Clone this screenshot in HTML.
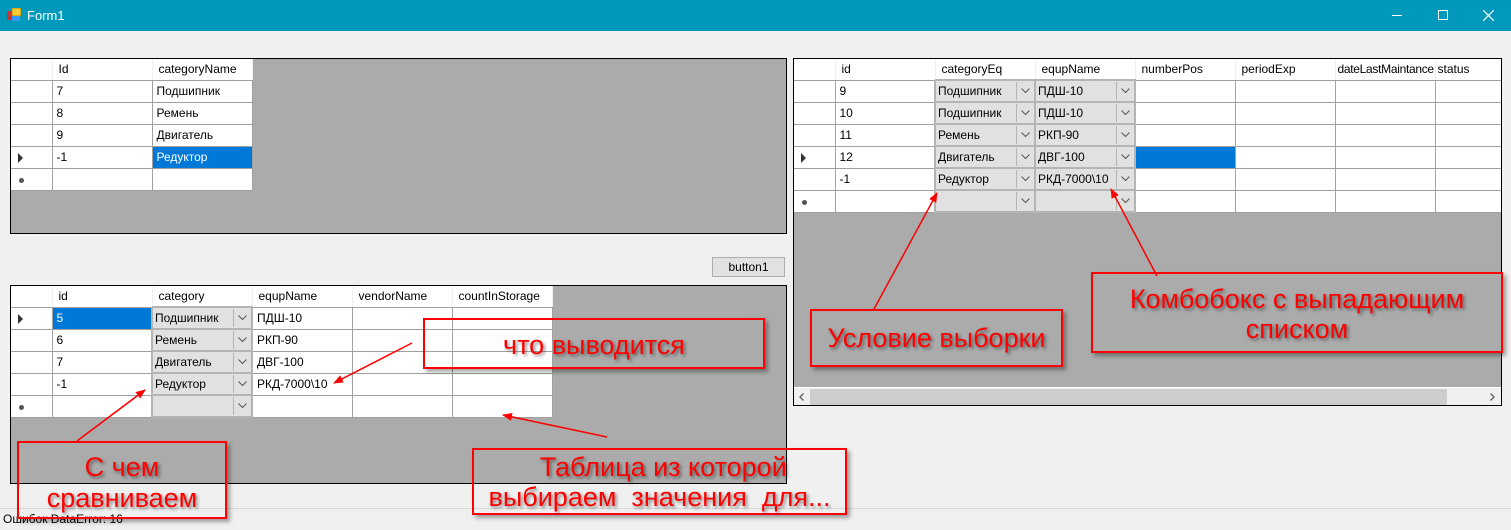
<!DOCTYPE html>
<html><head><meta charset="utf-8"><style>
*{box-sizing:border-box;margin:0;padding:0}
body{width:1511px;height:530px;background:#f0f0f0;position:relative;overflow:hidden;font-family:"Liberation Sans","DejaVu Sans",sans-serif;font-size:12px;color:#000}
.tb{position:absolute;left:0;top:0;width:1511px;height:31px;background:#0099bc;color:#fff}
.grid{position:absolute;background:#ababab;border:1px solid #000;overflow:hidden}
table{border-collapse:collapse;table-layout:fixed;position:absolute;left:0;top:0}
td{height:22px;border-right:1px solid #a0a0a0;border-bottom:1px solid #a0a0a0;background:#fff;padding:0 0 0 4px;white-space:nowrap;overflow:hidden;font-size:12px;position:relative}
tr.h td{height:21px;border-bottom:1px solid #a0a0a0;border-right:1px solid #f0f0f0;padding-left:6px}
td.rh{padding:0;border-right:1px solid #a0a0a0}
tr.h td.rh{border-right:1px solid #f0f0f0}
td.sel{background:#0078d7;color:#fff}
td.cb{background:#e1e1e1;border:2px solid #b4b4b4;padding-left:2px}
td.cb::after{content:"";position:absolute;right:17px;top:1px;bottom:1px;width:1px;background:#b4b4b4}
td.cb svg{position:absolute;right:4px;top:7px}
.tri{position:absolute;left:7px;top:6px;width:0;height:0;border-left:5px solid #333;border-top:5px solid transparent;border-bottom:5px solid transparent}
.star{position:absolute;left:8px;top:9px;width:5px;height:5px;border-radius:50%;background:#555}
.box{position:absolute;border:2px solid #f00;box-shadow:3px 3px 4px rgba(0,0,0,.35);color:#f00;font-size:27px;text-align:center;line-height:30px;text-shadow:2px 2px 3px rgba(0,0,0,.45)}
</style></head><body>
<div class="tb">
 <svg style="position:absolute;left:7px;top:8px" width="14" height="14"><rect x="0" y="3" width="6" height="9" fill="#c33"/><rect x="5" y="0" width="9" height="8" fill="#fc3" stroke="#a80" stroke-width="1"/><rect x="5" y="8" width="8" height="5" fill="#39f"/></svg>
 <span style="position:absolute;left:27px;top:8px;font-size:13px">Form1</span>
 <div style="position:absolute;left:1392px;top:15px;width:10px;height:1px;background:#fff"></div>
 <div style="position:absolute;left:1438px;top:10px;width:10px;height:10px;border:1px solid #fff"></div>
 <svg style="position:absolute;left:1483px;top:10px" width="11" height="11"><path d="M0 0L11 11M11 0L0 11" stroke="#fff" stroke-width="1.2"/></svg>
</div>

<!-- grid 1 -->
<div class="grid" style="left:10px;top:58px;width:777px;height:176px">
<table style="width:241px">
<colgroup><col style="width:41px"><col style="width:100px"><col style="width:100px"></colgroup>
<tr class="h"><td class="rh"></td><td>Id</td><td>categoryName</td></tr>
<tr><td class="rh"></td><td>7</td><td>Подшипник</td></tr>
<tr><td class="rh"></td><td>8</td><td>Ремень</td></tr>
<tr><td class="rh"></td><td>9</td><td>Двигатель</td></tr>
<tr><td class="rh"><div class="tri"></div></td><td>-1</td><td class="sel">Редуктор</td></tr>
<tr><td class="rh"><div class="star"></div></td><td></td><td></td></tr>
</table></div>

<div style="position:absolute;left:712px;top:257px;width:73px;height:20px;background:#e1e1e1;border:1px solid #adadad;text-align:center;line-height:18px">button1</div>

<!-- grid 3 -->
<div class="grid" style="left:10px;top:285px;width:777px;height:199px">
<table style="width:541px">
<colgroup><col style="width:41px"><col style="width:100px"><col style="width:100px"><col style="width:100px"><col style="width:100px"><col style="width:100px"></colgroup>
<tr class="h"><td class="rh"></td><td>id</td><td>category</td><td>equpName</td><td>vendorName</td><td>countInStorage</td></tr>
<tr><td class="rh"><div class="tri"></div></td><td class="sel">5</td><td class="cb">Подшипник<svg width="9" height="6"><path d="M0.5 0.5L4.5 4.5L8.5 0.5" stroke="#555" fill="none"/></svg></td><td>ПДШ-10</td><td></td><td></td></tr>
<tr><td class="rh"></td><td>6</td><td class="cb">Ремень<svg width="9" height="6"><path d="M0.5 0.5L4.5 4.5L8.5 0.5" stroke="#555" fill="none"/></svg></td><td>РКП-90</td><td></td><td></td></tr>
<tr><td class="rh"></td><td>7</td><td class="cb">Двигатель<svg width="9" height="6"><path d="M0.5 0.5L4.5 4.5L8.5 0.5" stroke="#555" fill="none"/></svg></td><td>ДВГ-100</td><td></td><td></td></tr>
<tr><td class="rh"></td><td>-1</td><td class="cb">Редуктор<svg width="9" height="6"><path d="M0.5 0.5L4.5 4.5L8.5 0.5" stroke="#555" fill="none"/></svg></td><td>РКД-7000\10</td><td></td><td></td></tr>
<tr><td class="rh"><div class="star"></div></td><td></td><td class="cb"><svg width="9" height="6"><path d="M0.5 0.5L4.5 4.5L8.5 0.5" stroke="#555" fill="none"/></svg></td><td></td><td></td><td></td></tr>
</table></div>

<!-- grid 2 -->
<div class="grid" style="left:793px;top:58px;width:709px;height:348px">
<table style="width:707px">
<colgroup><col style="width:41px"><col style="width:100px"><col style="width:100px"><col style="width:100px"><col style="width:100px"><col style="width:100px"><col style="width:100px"><col style="width:66px"></colgroup>
<tr class="h"><td class="rh"></td><td>id</td><td>categoryEq</td><td>equpName</td><td>numberPos</td><td>periodExp</td><td style="padding-left:2px;letter-spacing:-0.3px">dateLastMaintance</td><td style="padding-left:2px">status</td></tr>
<tr><td class="rh"></td><td>9</td><td class="cb">Подшипник<svg width="9" height="6"><path d="M0.5 0.5L4.5 4.5L8.5 0.5" stroke="#555" fill="none"/></svg></td><td class="cb">ПДШ-10<svg width="9" height="6"><path d="M0.5 0.5L4.5 4.5L8.5 0.5" stroke="#555" fill="none"/></svg></td><td></td><td></td><td></td><td></td></tr>
<tr><td class="rh"></td><td>10</td><td class="cb">Подшипник<svg width="9" height="6"><path d="M0.5 0.5L4.5 4.5L8.5 0.5" stroke="#555" fill="none"/></svg></td><td class="cb">ПДШ-10<svg width="9" height="6"><path d="M0.5 0.5L4.5 4.5L8.5 0.5" stroke="#555" fill="none"/></svg></td><td></td><td></td><td></td><td></td></tr>
<tr><td class="rh"></td><td>11</td><td class="cb">Ремень<svg width="9" height="6"><path d="M0.5 0.5L4.5 4.5L8.5 0.5" stroke="#555" fill="none"/></svg></td><td class="cb">РКП-90<svg width="9" height="6"><path d="M0.5 0.5L4.5 4.5L8.5 0.5" stroke="#555" fill="none"/></svg></td><td></td><td></td><td></td><td></td></tr>
<tr><td class="rh"><div class="tri"></div></td><td>12</td><td class="cb">Двигатель<svg width="9" height="6"><path d="M0.5 0.5L4.5 4.5L8.5 0.5" stroke="#555" fill="none"/></svg></td><td class="cb">ДВГ-100<svg width="9" height="6"><path d="M0.5 0.5L4.5 4.5L8.5 0.5" stroke="#555" fill="none"/></svg></td><td class="sel"></td><td></td><td></td><td></td></tr>
<tr><td class="rh"></td><td>-1</td><td class="cb">Редуктор<svg width="9" height="6"><path d="M0.5 0.5L4.5 4.5L8.5 0.5" stroke="#555" fill="none"/></svg></td><td class="cb">РКД-7000\10<svg width="9" height="6"><path d="M0.5 0.5L4.5 4.5L8.5 0.5" stroke="#555" fill="none"/></svg></td><td></td><td></td><td></td><td></td></tr>
<tr><td class="rh"><div class="star"></div></td><td></td><td class="cb"><svg width="9" height="6"><path d="M0.5 0.5L4.5 4.5L8.5 0.5" stroke="#555" fill="none"/></svg></td><td class="cb"><svg width="9" height="6"><path d="M0.5 0.5L4.5 4.5L8.5 0.5" stroke="#555" fill="none"/></svg></td><td></td><td></td><td></td><td></td></tr>
</table>
<div style="position:absolute;left:0;top:328px;width:707px;height:18px;background:#f0f0f0;border-top:1px solid #fff">
 <div style="position:absolute;left:16px;top:1px;width:637px;height:16px;background:#cdcdcd"></div>
 <svg style="position:absolute;left:5px;top:5px" width="5" height="8"><path d="M4.5 0.5L1 4L4.5 7.5" stroke="#606060" fill="none" stroke-width="1.3"/></svg>
 <svg style="position:absolute;left:696px;top:5px" width="5" height="8"><path d="M0.5 0.5L4 4L0.5 7.5" stroke="#606060" fill="none" stroke-width="1.3"/></svg>
</div>
</div>

<div style="position:absolute;left:0;top:508px;width:1511px;height:1px;background:#d7d7d7"></div>
<div style="position:absolute;left:3px;top:512px;font-size:12px">Ошибок DataError: 16</div>

<!-- annotations -->
<svg style="position:absolute;left:0;top:0" width="1511" height="530">
<defs><marker id="a" markerWidth="10" markerHeight="8" refX="9" refY="4" orient="auto" markerUnits="userSpaceOnUse"><path d="M0 0L10 4L0 8z" fill="#f00"/></marker></defs>
<g stroke="#f00" stroke-width="1.5" fill="none" marker-end="url(#a)">
<line x1="412" y1="343" x2="334" y2="383"/>
<line x1="77" y1="441" x2="145" y2="390"/>
<line x1="607" y1="437" x2="503" y2="415"/>
<line x1="874" y1="309" x2="937" y2="193"/>
<line x1="1157" y1="276" x2="1111" y2="189"/>
</g></svg>
<div class="box" style="left:423px;top:318px;width:342px;height:51px;padding-top:10px">что выводится</div>
<div class="box" style="left:17px;top:441px;width:210px;height:78px;padding-top:9px;line-height:31px">С чем<br>сравниваем</div>
<div class="box" style="left:472px;top:448px;width:375px;height:67px;padding-top:2px;line-height:30px">&nbsp;Таблица из которой<br>выбираем&nbsp; значения&nbsp; для...</div>
<div class="box" style="left:810px;top:309px;width:253px;height:58px;padding-top:12px">Условие выборки</div>
<div class="box" style="left:1091px;top:272px;width:412px;height:81px;padding-top:10px">Комбобокс с выпадающим<br>списком</div>
</body></html>
